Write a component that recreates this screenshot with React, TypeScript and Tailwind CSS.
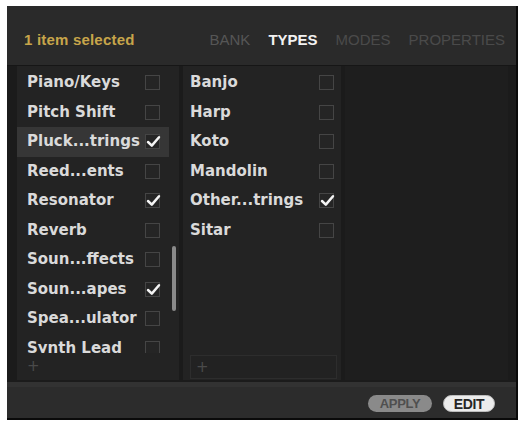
import React from "react";

type Item = { label: string; checked?: boolean; active?: boolean };

const col1: Item[] = [
  { label: "Piano/Keys" },
  { label: "Pitch Shift" },
  { label: "Pluck...trings", checked: true, active: true },
  { label: "Reed...ents" },
  { label: "Resonator", checked: true },
  { label: "Reverb" },
  { label: "Soun...ffects" },
  { label: "Soun...apes", checked: true },
  { label: "Spea...ulator" },
  { label: "Synth Lead" },
];

const col2: Item[] = [
  { label: "Banjo" },
  { label: "Harp" },
  { label: "Koto" },
  { label: "Mandolin" },
  { label: "Other...trings", checked: true },
  { label: "Sitar" },
];

function Check({ checked }: { checked?: boolean }) {
  return (
    <div className="relative ml-auto w-[15px] h-[15px] shrink-0 border border-[#454545] bg-[#252525]">
      {checked && (
        <svg
          className="absolute left-[-1px] top-[-2px]"
          width="17"
          height="17"
          viewBox="0 0 17 17"
        >
          <path
            d="M3 9 L6.8 12.6 L14 4.2"
            fill="none"
            stroke="#f4f4f4"
            strokeWidth="2.5"
            strokeLinecap="round"
            strokeLinejoin="round"
          />
        </svg>
      )}
    </div>
  );
}

function Row({ item, pl, pr }: { item: Item; pl: string; pr: string }) {
  return (
    <div
      className={`h-[29.5px] flex items-center ${pl} ${pr} ${
        item.active ? "bg-[#363636]" : ""
      }`}
    >
      <span
        className="text-[15px] font-bold text-[#dadada] whitespace-nowrap leading-none"
        style={{ fontFamily: '"DejaVu Sans", sans-serif' }}
      >
        {item.label}
      </span>
      <Check checked={item.checked} />
    </div>
  );
}

function Plus() {
  return (
    <span
      className="text-[15px] text-[#4a4a4a] leading-none"
      style={{ fontFamily: '"DejaVu Sans", sans-serif' }}
    >
      +
    </span>
  );
}

export default function App() {
  return (
    <div
      className="w-[526px] h-[423px] bg-white pt-[6px] pl-[7px]"
      style={{ fontFamily: '"Liberation Sans", Arial, sans-serif' }}
    >
      <div className="w-[511px] h-[414px] bg-[#2a2a2a] border-r-2 border-b-2 border-[#0a0a0a] flex flex-col">
        {/* header */}
        <div className="h-[59px] flex items-start pt-[25px] pl-[17px] pr-[11px]">
          <span className="text-[15px] font-bold text-[#c7a54a] leading-[18px] whitespace-nowrap tracking-[0.2px]">
            1 item selected
          </span>
          <div className="ml-auto flex gap-[18px] text-[15px] leading-[18px] whitespace-nowrap">
            <span className="text-[#565656]">BANK</span>
            <span className="text-[#f2f2f2] font-bold">TYPES</span>
            <span className="text-[#4a4a4a]">MODES</span>
            <span className="text-[#4a4a4a]">PROPERTIES</span>
          </div>
        </div>

        {/* columns */}
        <div className="h-[317px] flex gap-[4px] pl-[10px] pr-[8px] pb-[2px] bg-[#1b1b1b] border-t border-[#161616]">
          {/* column 1 */}
          <div className="w-[162px] bg-[#232323] flex flex-col pt-[2px]">
            <div className="relative h-[285px] overflow-hidden">
              <div className="w-[152px]">
                {col1.map((it) => (
                  <Row key={it.label} item={it} pl="pl-[10px]" pr="pr-[9px]" />
                ))}
              </div>
              <div className="absolute left-[155px] top-[178px] w-[4px] h-[65px] rounded-full bg-[#8a8a8a]" />
            </div>
            <div className="h-[27px] flex items-center pl-[10px]">
              <Plus />
            </div>
          </div>

          {/* column 2 */}
          <div className="w-[158px] bg-[#232323] flex flex-col pt-[2px]">
            <div className="h-[287px]">
              {col2.map((it) => (
                <Row key={it.label} item={it} pl="pl-[7px]" pr="pr-[7px]" />
              ))}
            </div>
            <div className="h-[24px] mx-[7px] mr-[4px] flex items-center pl-[5px] border border-[#2d2d2d] bg-[#222222]">
              <Plus />
            </div>
          </div>

          {/* column 3 */}
          <div className="flex-1 bg-[#1e1e1e]" />
        </div>

        {/* footer */}
        <div className="h-[36px] bg-[#2c2c2c] border-t-[5px] border-[#323232] flex items-center justify-end gap-[11px] pr-[21px] pt-[2px]">
          <div className="w-[64px] h-[17px] rounded-full bg-[#8a8a8a] flex items-center justify-center">
            <span className="text-[13px] font-bold text-[#4f4f4f] leading-none tracking-[-0.3px]">
              APPLY
            </span>
          </div>
          <div className="w-[52px] h-[17px] rounded-full bg-[#ececec] border border-[#bdbdbd] flex items-center justify-center">
            <span className="text-[14px] font-bold text-[#262626] leading-none tracking-[-0.3px]">
              EDIT
            </span>
          </div>
        </div>
      </div>
    </div>
  );
}
